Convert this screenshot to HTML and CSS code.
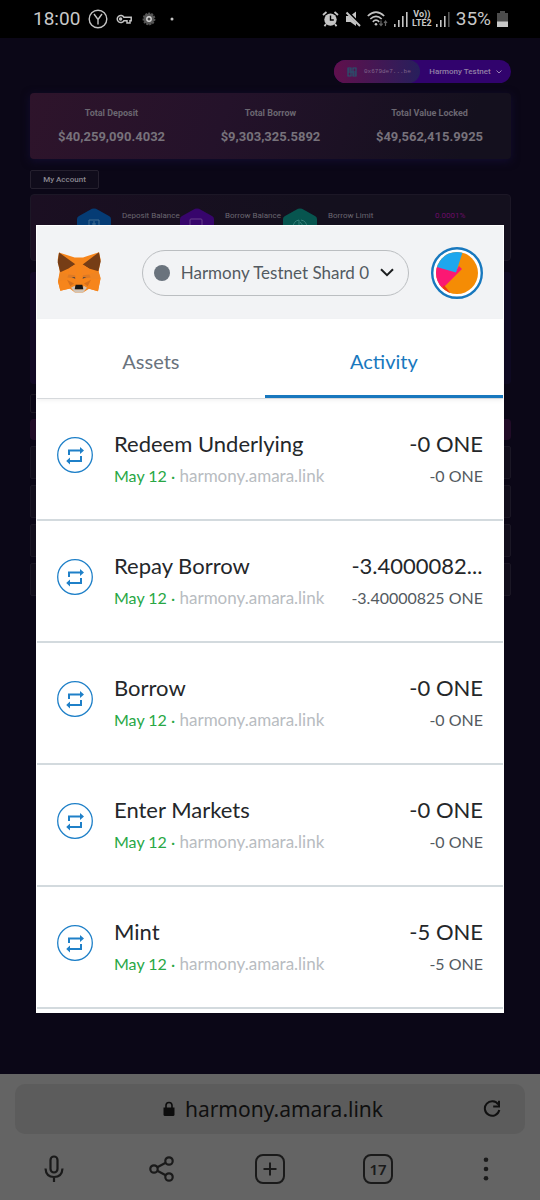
FILE: index.html
```html
<!DOCTYPE html>

<html lang="en">
    <head>
        <meta charset="utf-8">
        <meta name="viewport" content="width=device-width, initial-scale=1">
        <title>harmony.amara.link</title>
        <link rel="stylesheet" href="styles.css">
    </head>
    <body>
        <!-- Shared icons -->
        <svg class="defs" width="0" height="0">
            <symbol id="swap" viewBox="0 0 36 36">
                <circle cx="18" cy="18" r="17.3" fill="none" stroke="#1f80c8" stroke-width="1.3"/>
                <path d="M12 18V13.5H24M24 19V24H12" fill="none" stroke="#1f80c8" stroke-width="2"/>
                <path d="M23 10L27 13.500L23 17ZM13 20.500L9.200 24L13 27.500Z" fill="#1f80c8"/>
            </symbol>
            <symbol id="hex" viewBox="0 0 34 38">
                <path d="M15 .8Q17 0 19 .8L32 8Q34 9 34 11V27Q34 29 32 30L19 37Q17 38 15 37L2 30Q0 29 0 27V11Q0 9 2 8Z"/>
            </symbol>
        </svg>

        <header class="status_bar">
            <div class="status_group">
                <span class="clock">18:00</span>
                <svg width="20" height="20" viewBox="0 0 20 20" fill="none" stroke="#c4c4c4" stroke-width="1.4"><circle cx="10" cy="10" r="8.8"/><path d="M6 5L10 10.5L14 5M10 10.5V15.5"/></svg>
                <svg width="16" height="12" viewBox="0 0 16 12" fill="none" stroke="#c4c4c4" stroke-width="1.5"><path d="M8 4.3A3.6 3.6 0 1 0 8 7.7H11V10H14V7.7H15.2V4.3Z"/><circle cx="4.6" cy="6" r="1" fill="#c4c4c4"/></svg>
                <svg class="gap_wide" width="14" height="14" viewBox="0 0 14 14"><circle cx="7" cy="7" r="5.4" fill="#555" stroke="#555" stroke-width="2" stroke-dasharray="2 1"/><circle cx="7" cy="7" r="2.2" fill="#444" stroke="#d4d4d4" stroke-width="1.4"/></svg>
                <svg class="gap_wide" width="14" height="4" viewBox="0 0 14 4"><circle cx="6" cy="2" r="1.5" fill="#c4c4c4"/></svg>
            </div>
            <div class="status_group status_right">
                <svg width="17" height="16" viewBox="0 0 17 16"><path d="M1 4L4.5 1M16 4L12.5 1M4 13L2.5 15.3M13 13L14.5 15.3" stroke="#c4c4c4" stroke-width="1.8"/><circle cx="8.5" cy="8.6" r="6.2" fill="#c4c4c4"/><path d="M8.5 4.5V9H11.8" fill="none" stroke="#000" stroke-width="1.4"/></svg>
                <svg width="16" height="16" viewBox="0 0 16 16" fill="#c4c4c4"><path d="M1 5H4L11 12V15L5.5 11H1ZM7 3.5L11 .5V7.5Z"/><path d="M1.5 1.5L15 15" stroke="#c4c4c4" stroke-width="1.9"/></svg>
                <svg width="21" height="16" viewBox="0 0 21 16" fill="none" stroke="#c4c4c4" stroke-width="1.7"><path d="M.8 5Q9 -2.6 17.2 5M3.3 8Q9 2.6 14.7 8M5.8 10.8Q9 7.6 12.2 10.8"/><circle cx="9" cy="13.2" r="1.3" fill="#c4c4c4" stroke="none"/><path d="M14 9.5V14.5M12.4 12.6L14 14.5L15.6 12.6M18.5 15V10M17 12L18.5 10L20 12" stroke="#666" stroke-width="1.2"/></svg>
                <svg width="14" height="16" viewBox="0 0 14 16" fill="#c4c4c4"><path d="M0 13H1.6V16H0ZM4 9H5.6V16H4ZM8 5H9.6V16H8ZM12 1H13.6V16H12Z"/></svg>
                <span class="volte">Vo))<br>LTE2</span>
                <svg width="14" height="16" viewBox="0 0 14 16" fill="#c4c4c4"><path d="M0 13H1.6V16H0ZM4 9H5.6V16H4ZM8 5H9.6V16H8Z"/><path d="M12 1H13.6V16H12Z" fill="#555"/></svg>
                <span class="battery_level">35%</span>
                <svg width="11" height="16" viewBox="0 0 11 16"><path d="M3 0H8V2H11V11H0V2H3Z" fill="#4c4c4c"/><path d="M0 10.5H11V16H0Z" fill="#c8c8c8"/></svg>
            </div>
        </header>

        <main class="page">
            <!-- Dimmed site -->
            <div class="wallet_bar">
                <button class="wallet_address">
                    <svg width="10" height="10" viewBox="0 0 10 10" fill="none" stroke="#27546e" stroke-width="1.2"><path d="M1 1H4V9H1ZM6 1H9V9H6ZM1 5H9M1 3H4M6 7H9"/></svg>
                    <span>0x679de7...be</span>
                </button>
                <button class="wallet_network">
                    <span>Harmony Testnet</span>
                    <svg width="6" height="4" viewBox="0 0 6 4" fill="none" stroke="#9a82b4" stroke-width="1"><path d="M.5 .5L3 3L5.5 .5"/></svg>
                </button>
            </div>
            <section class="totals">
                <div><h3>Total Deposit</h3><p>$40,259,090.4032</p></div>
                <div><h3>Total Borrow</h3><p>$9,303,325.5892</p></div>
                <div><h3>Total Value Locked</h3><p>$49,562,415.9925</p></div>
            </section>
            <button class="section_tab">My Account</button>
            <section class="account">
                <div class="stat">
                    <svg width="34" height="38"><use href="#hex" fill="#053c75"/><path d="M12 12H22V20H12ZM17 13V20M15 16H19" fill="none" stroke="#426c91"/></svg>
                    <span>Deposit Balance</span>
                </div>
                <div class="stat">
                    <svg width="34" height="38"><use href="#hex" fill="#37056c"/><path d="M22 20V12Q22 11 21 11H11Q10 11 10 12V20M19 18H24" fill="none" stroke="#69408b"/></svg>
                    <span>Borrow Balance</span>
                </div>
                <div class="stat">
                    <svg width="34" height="38"><use href="#hex" fill="#07554f"/><path d="M10 20Q10 13 16 12V20M18 12Q24 13 24 20M17 14L21 19" fill="none" stroke="#35807a"/></svg>
                    <span>Borrow Limit</span>
                </div>
                <div class="stat limit_value"><span>0.0001%</span></div>
            </section>
            <section class="chart"></section>
            <div class="market_tab"></div>
            <div class="market_head"></div>
            <div class="market_rows">
                <div></div><div></div><div></div><div></div>
            </div>

            <!-- Wallet -->
            <div class="wallet">
                <div class="wallet_header">
                    <svg width="44" height="41" viewBox="82 82 132 122">
                        <path d="M88 83L135 98H160L208 82L213 105L207 140L213 160L205 199L178 192L160 203H136L120 191L92 198L85 170L90 140L84 105Z" fill="#f6851b"/>
                        <path d="M88 83L137 118L118 130L92 142L84 112ZM208 82L159 119L178 131L206 139L213 110Z" fill="#763d16"/>
                        <path d="M118 130L137 118L141 153L117 148ZM159 119L178 131L179 148L155 153Z" fill="#f5841f"/>
                        <path d="M92 142L117 148L112 164L85 170ZM206 139L179 148L184 164L212 161Z" fill="#f08420"/>
                        <path d="M85 170L112 165L122 191L92 198ZM184 165L212 162L205 199L176 191Z" fill="#f6851b"/>
                        <path d="M112 165L133 176L122 184ZM184 165L163 176L174 184Z" fill="#d5701c"/>
                        <path d="M117 149L136 151L139 162L113 158ZM179 149L160 151L157 162L183 158Z" fill="#dd7a25"/>
                        <path d="M126 158L135 157L137 161ZM170 158L161 157L159 161Z" fill="#233447"/>
                        <path d="M124 189L135 183L138 193H159L162 183L172 189L160 203H136Z" fill="#d0c4b8"/>
                        <path d="M138 180H158L161 193H135Z" fill="#161616"/>
                    </svg>
                    <button class="network">
                        <span class="network_dot"></span>
                        <span>Harmony Testnet Shard 0</span>
                        <svg width="14" height="9" viewBox="0 0 14 9" fill="none" stroke="#1c1e20" stroke-width="2"><path d="M1 1.2L7 7.2L13 1.2"/></svg>
                    </button>
                    <button class="avatar" aria-label="Account">
                        <svg width="52" height="52" viewBox="0 0 52 52">
                            <circle cx="26" cy="26" r="24.8" fill="#fff" stroke="#1878be" stroke-width="2.4"/>
                            <clipPath id="face"><circle cx="26" cy="26" r="21"/></clipPath>
                            <g clip-path="url(#face)">
                                <path d="M0 0H52V52H0Z" fill="#f58c05"/>
                                <path d="M0 18L25 24L28 19L31 22L14 39L0 46Z" fill="#fb1873"/>
                                <path d="M13 38L24 52H5Z" fill="#ee3613"/>
                                <path d="M2 19L25 25.500L32 4V0H2Z" fill="#1ea7ee"/>
                            </g>
                        </svg>
                    </button>
                </div>
                <div class="tabs">
                    <button class="tab">Assets</button>
                    <button class="tab tab_active">Activity</button>
                </div>
                <div class="activity">
                    <div class="entry">
                        <svg class="entry_icon" width="36" height="36"><use href="#swap"/></svg>
                        <div class="entry_info">
                            <h2>Redeem Underlying</h2>
                            <p><span class="date">May 12 ·</span> harmony.amara.link</p>
                        </div>
                        <div class="entry_amount"><h2>-0 ONE</h2><p>-0 ONE</p></div>
                    </div>
                    <div class="entry">
                        <svg class="entry_icon" width="36" height="36"><use href="#swap"/></svg>
                        <div class="entry_info">
                            <h2>Repay Borrow</h2>
                            <p><span class="date">May 12 ·</span> harmony.amara.link</p>
                        </div>
                        <div class="entry_amount"><h2 class="truncated">-3.4000082...</h2><p>-3.40000825 ONE</p></div>
                    </div>
                    <div class="entry">
                        <svg class="entry_icon" width="36" height="36"><use href="#swap"/></svg>
                        <div class="entry_info">
                            <h2>Borrow</h2>
                            <p><span class="date">May 12 ·</span> harmony.amara.link</p>
                        </div>
                        <div class="entry_amount"><h2>-0 ONE</h2><p>-0 ONE</p></div>
                    </div>
                    <div class="entry">
                        <svg class="entry_icon" width="36" height="36"><use href="#swap"/></svg>
                        <div class="entry_info">
                            <h2>Enter Markets</h2>
                            <p><span class="date">May 12 ·</span> harmony.amara.link</p>
                        </div>
                        <div class="entry_amount"><h2>-0 ONE</h2><p>-0 ONE</p></div>
                    </div>
                    <div class="entry">
                        <svg class="entry_icon" width="36" height="36"><use href="#swap"/></svg>
                        <div class="entry_info">
                            <h2>Mint</h2>
                            <p><span class="date">May 12 ·</span> harmony.amara.link</p>
                        </div>
                        <div class="entry_amount"><h2>-5 ONE</h2><p>-5 ONE</p></div>
                    </div>
                </div>
            </div>
        </main>

        <footer class="browser">
            <div class="address">
                <span></span>
                <a class="address_link" href="#">
                    <svg width="12" height="16" viewBox="0 0 12 16"><path d="M.5 6.500H11.500V13.500Q11.500 15 10 15H2Q.5 15 .5 13.500Z" fill="#0c0c0c"/><path d="M3 7V4.500Q3 1.500 6 1.500T9 4.500V7" fill="none" stroke="#0c0c0c" stroke-width="1.6"/></svg>
                    <span>harmony.amara.link</span>
                </a>
                <button class="reload" aria-label="Reload">
                    <svg width="18" height="18" viewBox="0 0 18 18" fill="none" stroke="#101010" stroke-width="2"><path d="M15.300 4.500A7.300 7.300 0 1 0 16.300 10M16 .8V6.500H10.200"/></svg>
                </button>
            </div>
            <nav class="toolbar">
                <button aria-label="Voice">
                    <svg width="20" height="28" viewBox="0 0 20 28" fill="none" stroke="#1a1a1a" stroke-width="2.2"><rect x="6.500" y="1.500" width="7" height="16" rx="3.500"/><path d="M1.500 13.500Q2 22 10 22T18.500 13.500M10 22V27"/></svg>
                </button>
                <button aria-label="Share">
                    <svg width="26" height="26" viewBox="0 0 26 26" fill="none" stroke="#1a1a1a" stroke-width="2.2"><circle cx="5" cy="13" r="3.700"/><circle cx="20" cy="5" r="3.700"/><circle cx="20" cy="21" r="3.700"/><path d="M8.300 11.300L16.700 6.800M8.300 14.700L16.700 19.200"/></svg>
                </button>
                <button aria-label="New tab">
                    <svg width="30" height="30" viewBox="0 0 30 30" fill="none" stroke="#1a1a1a" stroke-width="2"><rect x="1" y="1" width="28" height="28" rx="7"/><path d="M15 8.500V21.500M8.500 15H21.500"/></svg>
                </button>
                <button aria-label="Tabs"><span class="tab_count">17</span></button>
                <button aria-label="Menu">
                    <svg width="6" height="24" viewBox="0 0 6 24" fill="#1a1a1a"><circle cx="3" cy="2.700" r="2.300"/><circle cx="3" cy="12" r="2.300"/><circle cx="3" cy="21.300" r="2.300"/></svg>
                </button>
            </nav>
        </footer>
    </body>
</html>
```
FILE: styles.css
```css
* {
    box-sizing: border-box;
}

html, body {
    margin: 0;      padding: 0;

    --page-bg:      #0b0717;
    --blue:         #1878be;
    --green:        #28a745;
    --text:         #24272a;
    --muted:        #6a737d;
    --wallet-font:  "Lato", sans-serif;

    background-color: var(--page-bg);
    font-family: "Roboto", sans-serif;
}

body {
    display: flex;
    flex-direction: column;
    min-height: 100vh;
}

h2, h3, p {
    margin: 0;
    font-weight: normal;
}

button {
    margin: 0;      padding: 0;
    border: none;
    background: none;
    color: inherit;
    font-family: inherit;
    cursor: pointer;
}

svg {
    display: block;
    flex-shrink: 0;
}

.defs {
    position: absolute;
}

/* Status Bar */
.status_bar {
    display: flex;
    align-items: center;
    justify-content: space-between;
    height: 38px;
    padding: 0 32px 0 33px;
    background-color: #000000;
    color: #c8c8c8;
}
.status_group {
    display: flex;
    align-items: center;
    gap: 8px;
}
.status_right {
    gap: 6px;
}
.gap_wide {
    margin-left: 2px;
}
.clock, .battery_level {
    font-size: 19px;
    line-height: 20px;
}
.volte {
    font-size: 9px;
    line-height: 9px;
    font-weight: bold;
    text-align: center;
    margin: 0 -2px;
}

/* Site */
.page {
    position: relative;
    flex: 1;
    padding: 22px 29px 0 30px;
    color: #6b6771;
}
.wallet_bar {
    display: flex;
    width: 177px;
    height: 23px;
    margin-left: auto;
    border-radius: 12px;
    background-color: #31036d;
    color: #9180a6;
}
.wallet_address {
    display: flex;
    align-items: center;
    gap: 7px;
    width: 86px;
    padding-left: 13px;
    border-radius: 12px;
    background: linear-gradient(90deg, #60104c, #271f5c);
    font-family: "Liberation Mono", monospace;
    font-size: 6px;
    color: #80658b;
}
.wallet_network {
    display: flex;
    flex: 1;
    align-items: center;
    justify-content: center;
    gap: 5px;
    font-size: 8px;
    font-weight: 500;
}

.totals {
    display: grid;
    grid-template-columns: repeat(3, 1fr);
    height: 66px;
    margin-top: 10px;
    padding: 12px 2px 0;
    border-radius: 4px;
    background: linear-gradient(110deg, #2e142b, #24122a 40%, #14101e 90%);
    box-shadow: 0 2px 8px #120d30;
    text-align: center;
}
.totals h3 {
    font-size: 9px;
    line-height: 16px;
    font-weight: bold;
}
.totals p {
    font-size: 13px;
    line-height: 32px;
    font-weight: bold;
    color: #77727b;
}

.section_tab {
    display: block;
    width: 69px;
    height: 19px;
    margin: 11px 0 5px;
    border: solid 1px #25202e;
    border-radius: 2px;
    background-color: #100c1b;
    font-size: 8px;
    font-weight: 500;
    color: #8a8790;
}

.account {
    display: flex;
    gap: 4px;
    height: 67px;
    padding: 13px 0 0 46px;
    border: solid 1px #1c1726;
    border-radius: 4px;
    background: linear-gradient(90deg, #1b0f22, #14101e 60%);
}
.stat {
    display: flex;
    gap: 11px;
    width: 99px;
    font-size: 8px;
    line-height: 16px;
    white-space: nowrap;
}
.limit_value {
    padding-left: 49px;
    color: #6c0c68;
}

.chart {
    height: 112px;
    margin-top: 11px;
    border-radius: 4px;
    background: linear-gradient(90deg, #130926, #0e0922);
}
.market_tab {
    width: 69px;
    height: 19px;
    margin: 10px 0 6px;
    border: solid 1px #1b1723;
    border-radius: 2px;
}
.market_head {
    height: 21px;
    border-radius: 4px;
    background-color: #220c28;
}
.market_rows > div {
    height: 33px;
    margin-top: 6px;
    border: solid 1px #1b1725;
    border-radius: 2px;
    background-color: #120e1c;
}

/* Wallet */
.wallet {
    position: absolute;
    top: 187px;
    left: 36px;     right: 36px;
    padding: 1px 1px 4px;
    background-color: #ffffff;
    font-family: var(--wallet-font);
    color: var(--text);
}
.wallet_header {
    display: flex;
    align-items: center;
    gap: 22px;
    height: 93px;
    padding: 0 20px;
    background-color: #f2f3f5;
}
.network {
    display: flex;
    align-items: center;
    gap: 11px;
    height: 46px;
    margin-left: auto;
    padding: 0 14px 0 11px;
    border: solid 1px #bbbec1;
    border-radius: 23px;
    font-size: 17px;
    color: #535a61;
}
.network_dot {
    width: 16px;
    height: 16px;
    border-radius: 50%;
    background-color: var(--muted);
}

/* Tabs */
.tabs {
    display: grid;
    grid-template-columns: 22fr 23fr;
    height: 80px;
    border-bottom: solid 1px #d6d9dc;
    box-shadow: 0 2px 4px #0000000c;
}
.tab {
    padding-top: 7px;
    border-bottom: solid 3px transparent;
    font-size: 20px;
    color: var(--muted);
}
.tab_active {
    border-bottom-color: var(--blue);
    color: var(--blue);
}

/* Activity */
.entry {
    display: flex;
    height: 122px;
    padding: 29px 20px 0;
    border-bottom: solid 2px #d3dade;
}
.entry_icon {
    margin-top: 9px;
}
.entry_info {
    flex: 1;
    margin-left: 21px;
}
.entry h2 {
    font-size: 22px;
    line-height: 32px;
}
.entry p {
    font-size: 17px;
    line-height: 32px;
    color: #b8bcc1;
}
.entry .date {
    font-size: 16px;
    color: var(--green);
}
.entry_amount {
    text-align: right;
}
.entry_amount .truncated {
    text-align: left;
}
.entry_amount p {
    font-size: 16px;
    color: #535a61;
}

/* Browser */
.browser {
    padding: 10px 15px 0;
    background-color: #646464;
    color: #101010;
    font-family: "Noto Sans", sans-serif;
}
.address {
    display: grid;
    grid-template-columns: 1fr auto 1fr;
    align-items: center;
    height: 50px;
    padding: 0 24px 0 30px;
    border-radius: 10px;
    background-color: #5c5c5c;
}
.address_link {
    display: flex;
    align-items: center;
    gap: 10px;
    color: inherit;
    font-size: 21px;
    text-decoration: none;
}
.reload {
    justify-self: end;
}
.toolbar {
    display: grid;
    grid-template-columns: repeat(5, 1fr);
    height: 66px;
    margin: 0 -15px;
    padding-top: 3px;
}
.toolbar button {
    display: flex;
    align-items: center;
    justify-content: center;
}
.tab_count {
    width: 30px;
    height: 30px;
    border: solid 2px #1a1a1a;
    border-radius: 8px;
    color: #1a1a1a;
    font-size: 15px;
    line-height: 26px;
    font-weight: 600;
}
```
